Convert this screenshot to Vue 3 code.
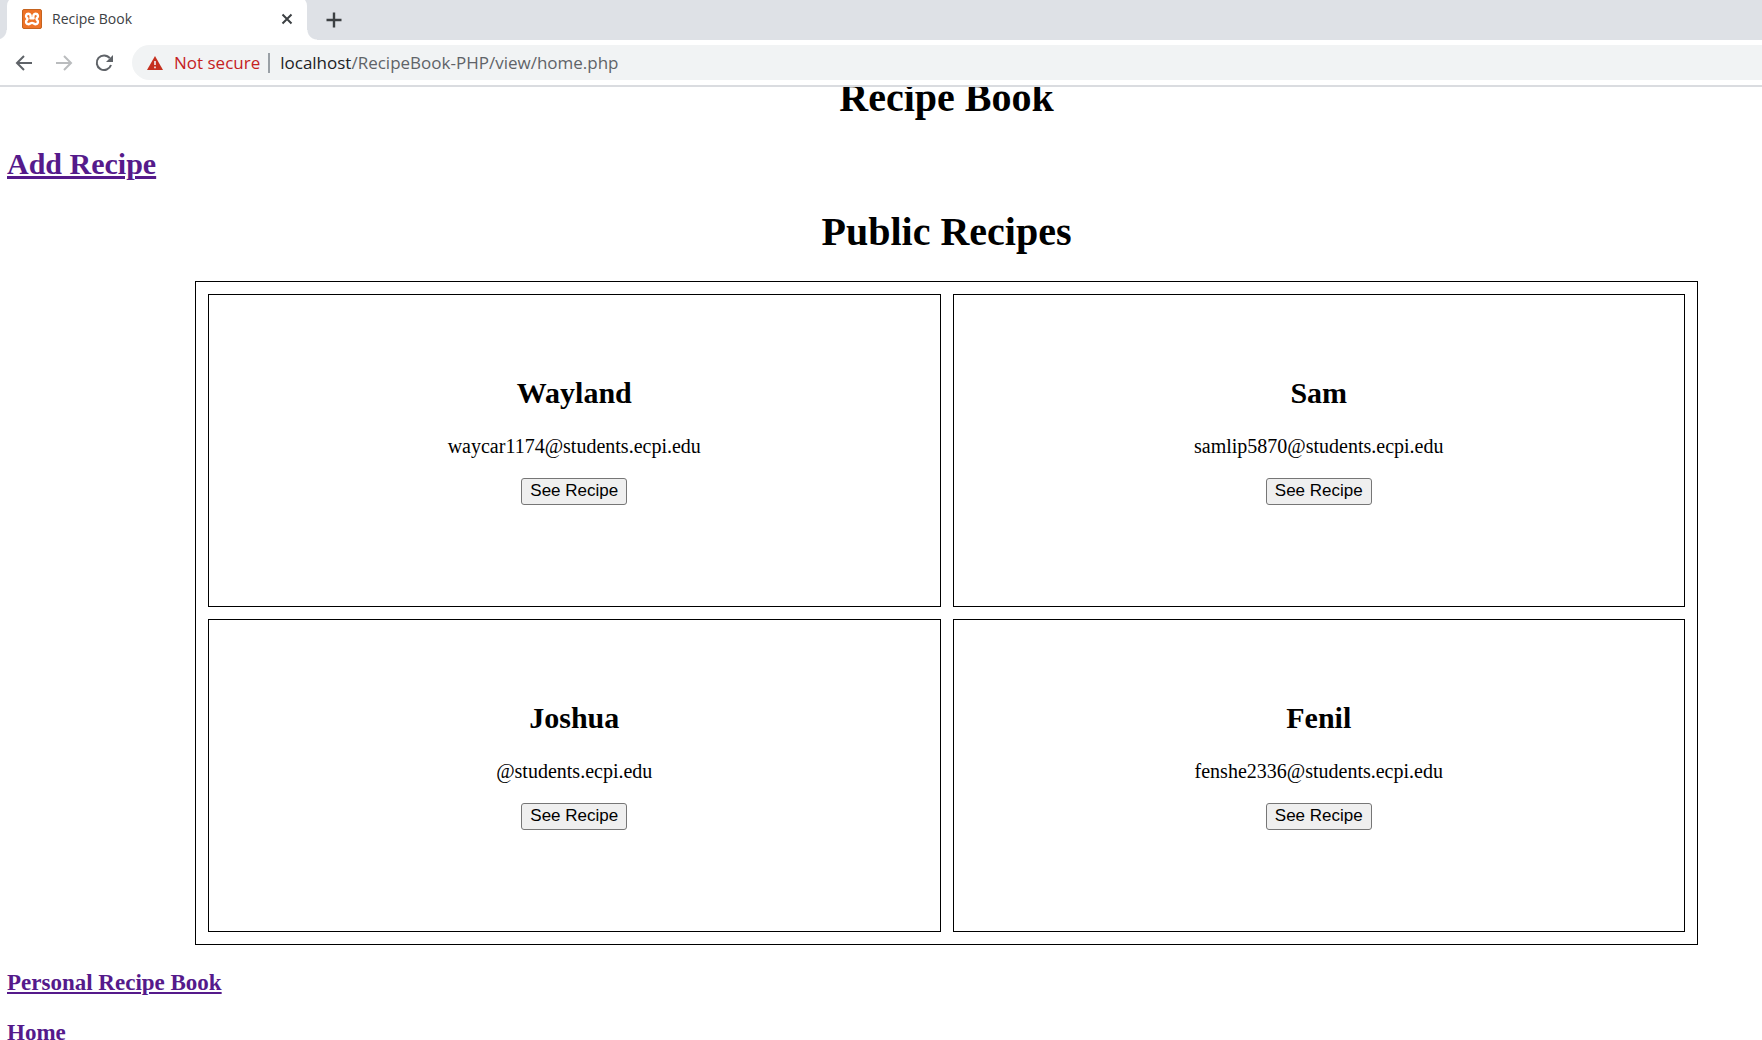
<script setup>
const recipes = [
  { name: 'Wayland', email: 'waycar1174@students.ecpi.edu' },
  { name: 'Sam', email: 'samlip5870@students.ecpi.edu' },
  { name: 'Joshua', email: '@students.ecpi.edu' },
  { name: 'Fenil', email: 'fenshe2336@students.ecpi.edu' },
]
</script>

<template>
  <div class="browser">
    <header class="chrome">
      <div class="tab-strip">
        <div class="tab">
          <svg class="favicon" width="20" height="20" viewBox="0 0 20 20" aria-hidden="true">
            <rect x="0.5" y="0.5" width="19" height="19" rx="1.5" fill="#ee7226" stroke="#c4631f" />
            <path
              d="M6.400 4.800C4 4.800 3.200 7.600 5 9c.6.5.6 1.500 0 2C3.200 12.400 4 15.200 6.400 15.200c1.600 0 2.100-1.300 3.600-1.300s2 1.300 3.600 1.300c2.400 0 3.200-2.800 1.400-4.200-.6-.5-.6-1.500 0-2 1.800-1.400 1-4.200-1.400-4.200-1.900 0-2.500 1.500-2.200 3.400l.2 1.100H8.400l.2-1.100C8.900 6.300 8.300 4.800 6.400 4.800z"
              fill="none"
              stroke="#fff"
              stroke-width="2.400"
              stroke-linejoin="round"
            />
          </svg>
          <span class="tab-title">Recipe Book</span>
          <button class="icon-button" type="button" aria-label="Close tab">
            <svg width="12" height="12" viewBox="0 0 12 12">
              <path d="M1.500 1.500l9 9M10.500 1.500l-9 9" stroke="#3c4043" stroke-width="2" />
            </svg>
          </button>
        </div>
        <button class="icon-button new-tab" type="button" aria-label="New tab">
          <svg width="16" height="16" viewBox="0 0 16 16">
            <path d="M8 .5v15M.5 8h15" stroke="#3c4043" stroke-width="2.400" />
          </svg>
        </button>
      </div>

      <div class="toolbar">
        <button class="icon-button" type="button" aria-label="Back">
          <svg width="18" height="16" viewBox="0 0 18 16">
            <path d="M17 8H2M9 1L2 8l7 7" fill="none" stroke="#5f6368" stroke-width="2" />
          </svg>
        </button>
        <button class="icon-button" type="button" aria-label="Forward" disabled>
          <svg width="18" height="16" viewBox="0 0 18 16">
            <path d="M1 8h15M9 1l7 7-7 7" fill="none" stroke="#babcbe" stroke-width="2" />
          </svg>
        </button>
        <button class="icon-button" type="button" aria-label="Reload">
          <svg width="18" height="18" viewBox="0 0 18 18">
            <path d="M14.800 4.200A7.300 7.300 0 1 0 16 11" fill="none" stroke="#5f6368" stroke-width="2" />
            <path d="M18 1v7h-7z" fill="#5f6368" />
          </svg>
        </button>
        <div class="omnibox">
          <svg class="warning" width="16" height="14" viewBox="0 0 16 14" aria-hidden="true">
            <path d="M8 0l8 14H0z" fill="#c5301f" />
            <path d="M8 5v4M8 10.500v1.700" stroke="#f1f3f4" stroke-width="1.600" />
          </svg>
          <span class="not-secure">Not secure</span>
          <span class="divider"></span>
          <div class="address" role="textbox" aria-label="Address" contenteditable="true" spellcheck="false"><span class="host">localhost</span>/RecipeBook-PHP/view/home.php</div>
        </div>
      </div>
    </header>

    <main class="page">
      <h1 class="site-title">Recipe Book</h1>
      <h2 class="add"><a href="#add">Add Recipe</a></h2>
      <h1>Public Recipes</h1>
      <section class="recipes">
        <article v-for="recipe in recipes" :key="recipe.name" class="card">
          <h2>{{ recipe.name }}</h2>
          <p>{{ recipe.email }}</p>
          <button class="see" type="button">See Recipe</button>
        </article>
      </section>
      <nav class="links">
        <h3><a href="#personal">Personal Recipe Book</a></h3>
        <h3><a href="#home">Home</a></h3>
      </nav>
    </main>
  </div>
</template>

<style>
body {
  background: #fff;
}
</style>

<style scoped>
.browser {
  display: flex;
  flex-direction: column;
  height: 100vh;
  overflow: hidden;
  color: #000;
  font-family: "Liberation Serif", "Times New Roman", serif;
}

.chrome {
  flex: none;
  border-bottom: 2px solid #dadce0;
  font-family: "Open Sans", "Segoe UI", sans-serif;
}

.tab-strip {
  display: flex;
  align-items: center;
  height: 40px;
  overflow: hidden;
  background: #dee1e6;
}

.tab {
  position: relative;
  box-sizing: border-box;
  display: flex;
  align-items: center;
  width: 300px;
  height: 44px;
  margin: -4px 0 0 7px;
  padding: 2px 14px 0 15px;
  border-radius: 10px 10px 0 0;
  background: #fff;
}

.tab::before,
.tab::after {
  content: "";
  position: absolute;
  bottom: 0;
  width: 10px;
  height: 10px;
}

.tab::before {
  right: 100%;
  background: radial-gradient(circle at 0 0, #dee1e6 9px, #fff 10px);
}

.tab::after {
  left: 100%;
  background: radial-gradient(circle at 100% 0, #dee1e6 9px, #fff 10px);
}

.tab-title {
  flex: 1;
  margin-left: 10px;
  color: #3c4043;
  font-size: 14px;
  line-height: 20px;
}

.icon-button {
  display: flex;
  padding: 0;
  border: 0;
  background: none;
}

.new-tab {
  margin-left: 19px;
}

.toolbar {
  display: flex;
  align-items: center;
  gap: 22px;
  height: 45px;
  padding-left: 15px;
}

.omnibox {
  flex: 1;
  display: flex;
  align-items: center;
  height: 35px;
  margin-left: -3px;
  padding-left: 15px;
  border-radius: 18px 0 0 18px;
  background: #f1f3f4;
  font-size: 17px;
  line-height: 24px;
}

.not-secure {
  margin-left: 11px;
  color: #c5221f;
}

.divider {
  width: 2px;
  height: 20px;
  margin: 0 10px 0 8px;
  background: #9aa0a6;
}

.address {
  color: #5f6368;
  white-space: nowrap;
}

.host {
  color: #202124;
}

.page {
  flex: 1;
  min-height: 0;
  overflow: hidden;
  padding: 0 64px 0 195px;
}

h1,
h2,
h3,
p {
  margin: 0;
}

h1 {
  font-size: 40px;
  line-height: 48px;
  text-align: center;
}

.site-title {
  margin-top: -13px;
}

h2 {
  font-size: 30px;
  line-height: 34px;
}

h3 {
  font-size: 23px;
  line-height: 27px;
}

a {
  color: #551a8b;
}

.add {
  margin: 25px 0 27px -188px;
}

.recipes {
  display: grid;
  grid-template-columns: 1fr 1fr;
  gap: 12px;
  margin-top: 25px;
  padding: 12px;
  border: 1px solid #000;
}

.card {
  display: flex;
  flex-direction: column;
  align-items: center;
  padding: 81px 0 101px;
  border: 1px solid #000;
}

.card p {
  margin: 25px 0 20px;
  font-size: 20px;
  line-height: 23px;
}

.see {
  height: 27px;
  padding: 0 8px 2px;
  border: 1px solid #767676;
  border-radius: 3px;
  background: #efefef;
  color: #000;
  font-family: "Liberation Sans", Arial, sans-serif;
  font-size: 17px;
  line-height: 20px;
}

.links {
  display: flex;
  flex-direction: column;
  gap: 23px;
  margin: 24px 0 0 -188px;
}
</style>
